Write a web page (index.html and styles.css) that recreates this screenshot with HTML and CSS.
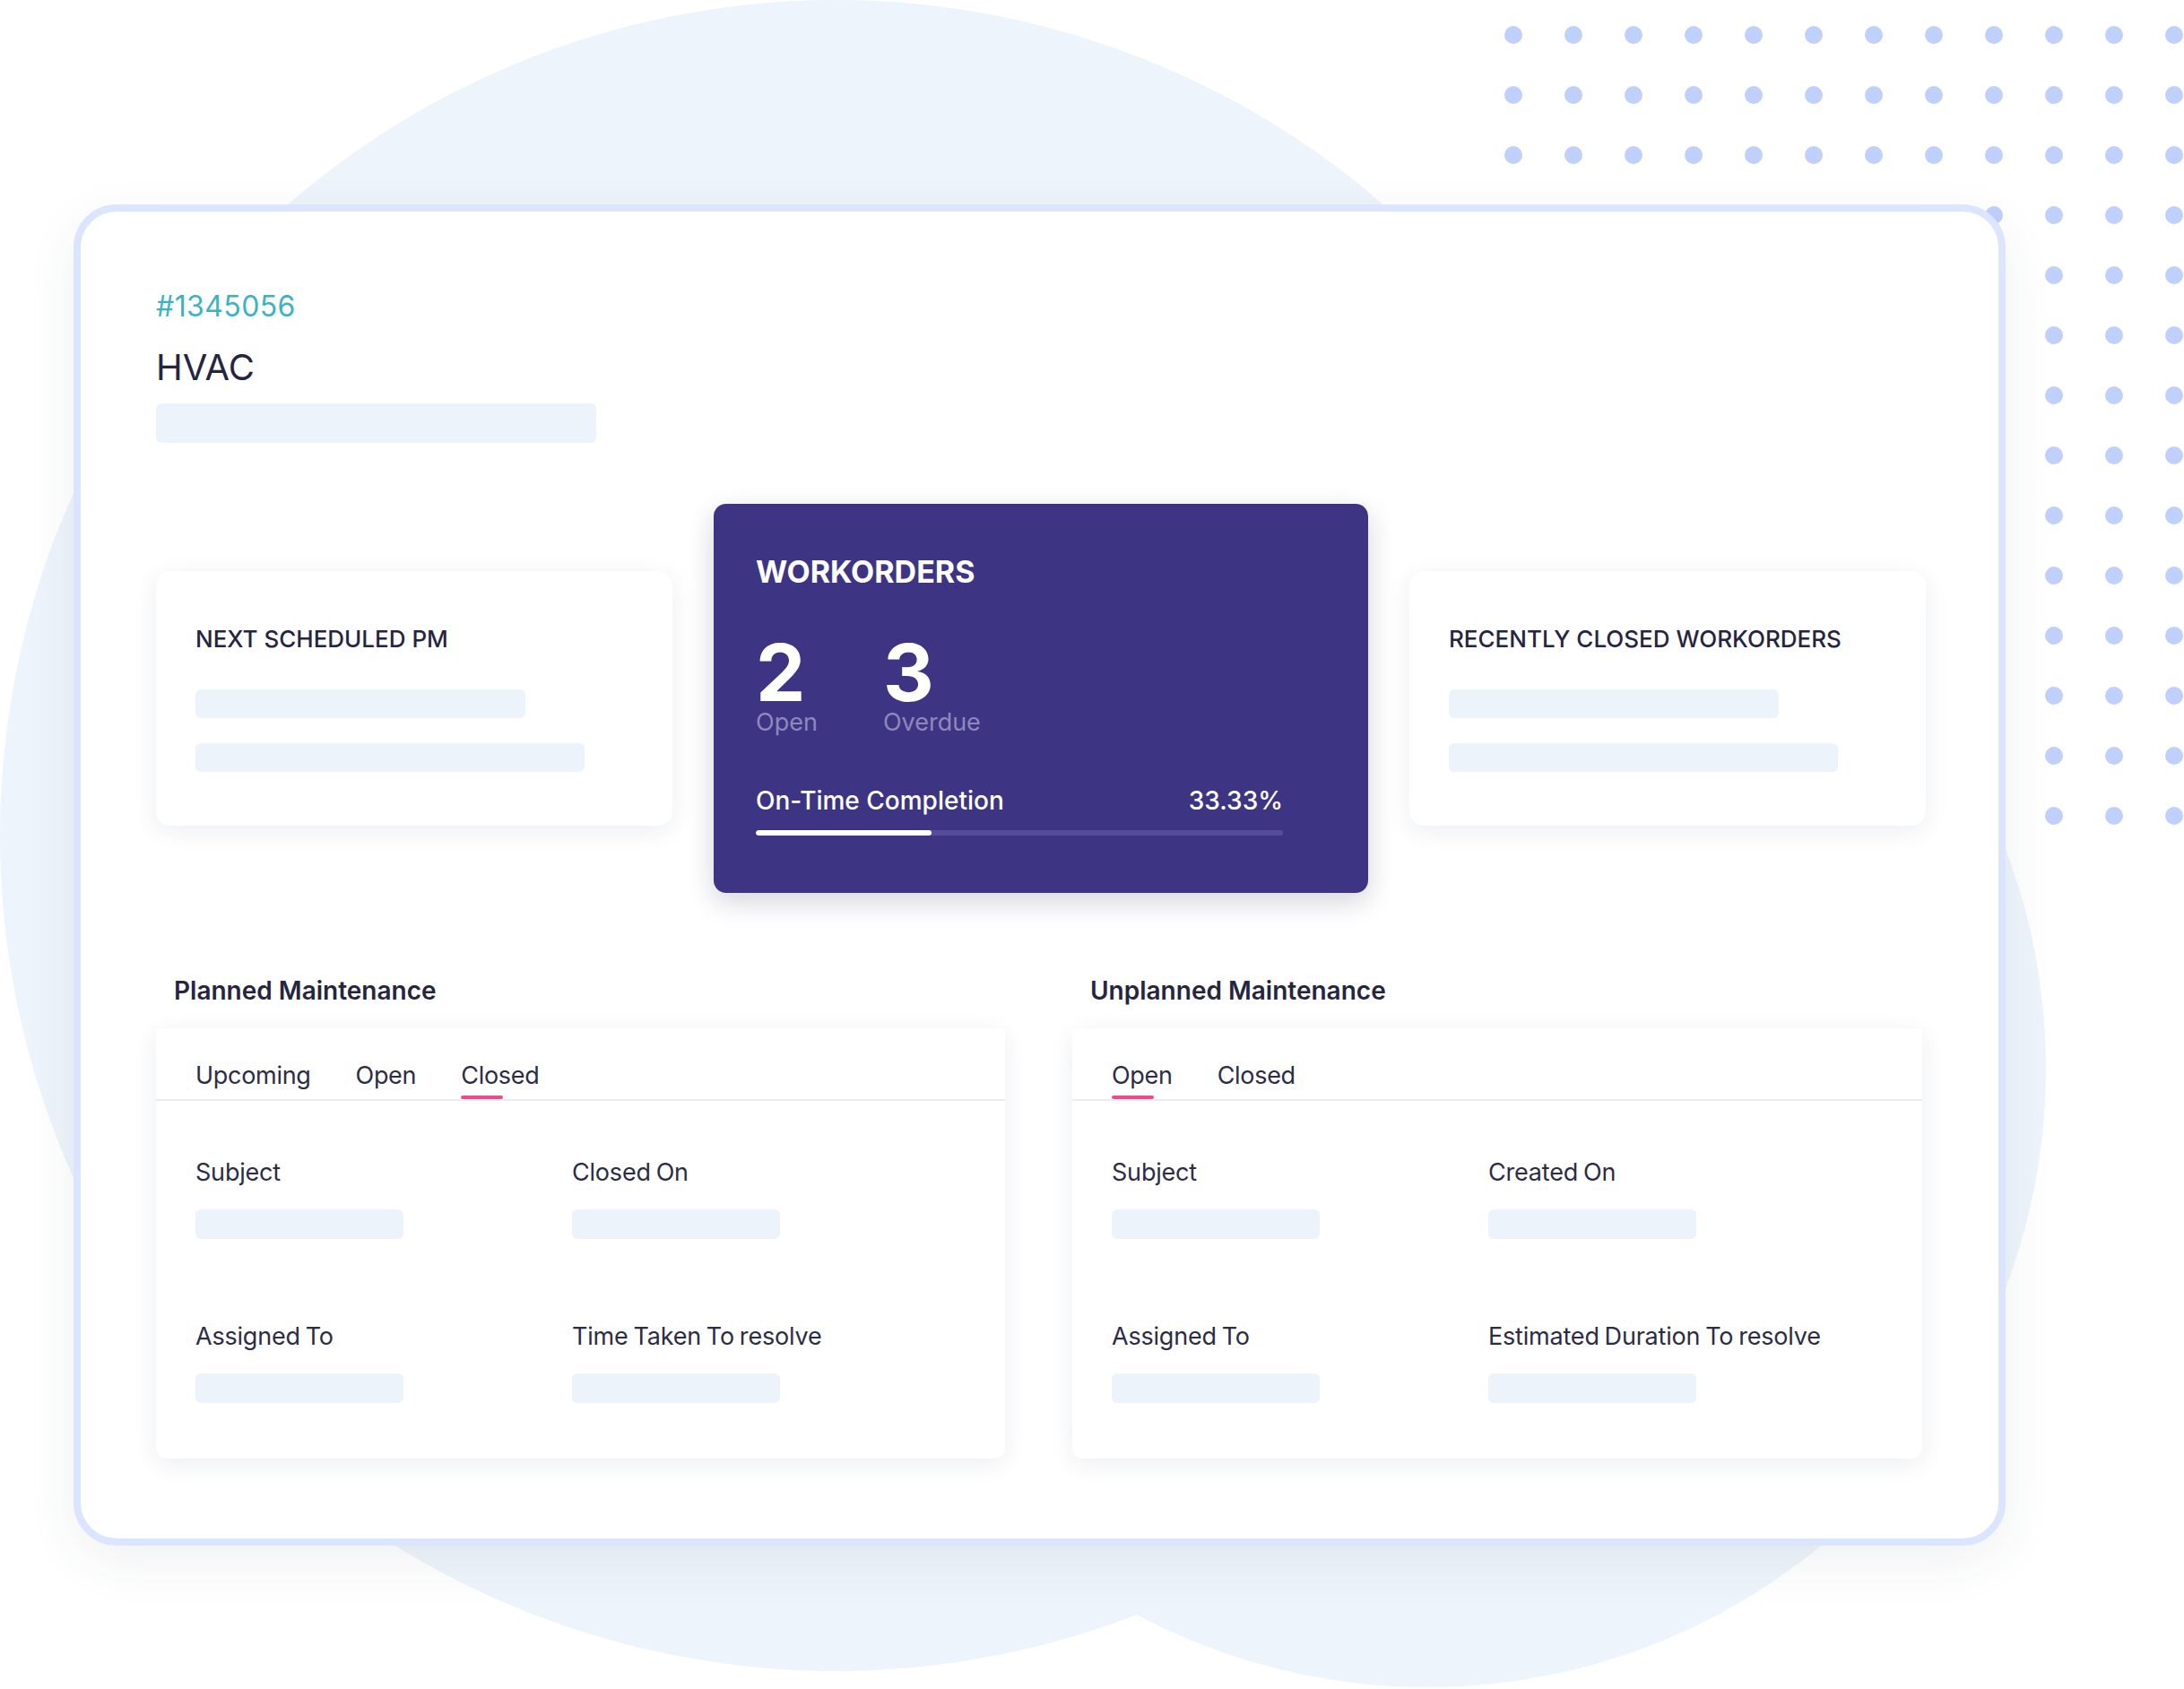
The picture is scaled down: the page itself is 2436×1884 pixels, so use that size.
FILE: index.html
```html
<!DOCTYPE html>
<html lang="en">
<head>
<meta charset="utf-8">
<title>HVAC asset</title>
<link rel="stylesheet" href="styles.css">
</head>
<body>
<div class="backdrop">
  <div class="blob blob-a"></div>
  <div class="blob blob-b"></div>
  <div class="dots">
    <span></span><span></span><span></span><span></span><span></span><span></span><span></span><span></span><span></span><span></span><span></span><span></span>
    <span></span><span></span><span></span><span></span><span></span><span></span><span></span><span></span><span></span><span></span><span></span><span></span>
    <span></span><span></span><span></span><span></span><span></span><span></span><span></span><span></span><span></span><span></span><span></span><span></span>
    <span></span><span></span><span></span><span></span><span></span><span></span><span></span><span></span><span></span><span></span><span></span><span></span>
    <span></span><span></span><span></span><span></span><span></span><span></span><span></span><span></span><span></span><span></span><span></span><span></span>
    <span></span><span></span><span></span><span></span><span></span><span></span><span></span><span></span><span></span><span></span><span></span><span></span>
    <span></span><span></span><span></span><span></span><span></span><span></span><span></span><span></span><span></span><span></span><span></span><span></span>
    <span></span><span></span><span></span><span></span><span></span><span></span><span></span><span></span><span></span><span></span><span></span><span></span>
    <span></span><span></span><span></span><span></span><span></span><span></span><span></span><span></span><span></span><span></span><span></span><span></span>
    <span></span><span></span><span></span><span></span><span></span><span></span><span></span><span></span><span></span><span></span><span></span><span></span>
    <span></span><span></span><span></span><span></span><span></span><span></span><span></span><span></span><span></span><span></span><span></span><span></span>
    <span></span><span></span><span></span><span></span><span></span><span></span><span></span><span></span><span></span><span></span><span></span><span></span>
    <span></span><span></span><span></span><span></span><span></span><span></span><span></span><span></span><span></span><span></span><span></span><span></span>
    <span></span><span></span><span></span><span></span><span></span><span></span><span></span><span></span><span></span><span></span><span></span><span></span>
  </div>
</div>

<main class="asset-card">
  <header class="asset-head">
    <div class="asset-id">#1345056</div>
    <h1 class="asset-name">HVAC</h1>
    <div class="skel skel-subtitle"></div>
  </header>

  <section class="summary-row">
    <div class="info-card">
      <h2 class="info-title">NEXT SCHEDULED PM</h2>
      <div class="skel skel-a"></div>
      <div class="skel skel-b"></div>
    </div>

    <div class="wo-card">
      <h2 class="wo-title">WORKORDERS</h2>
      <div class="wo-stats">
        <div class="wo-stat">
          <div class="wo-num">2</div>
          <div class="wo-label">Open</div>
        </div>
        <div class="wo-stat">
          <div class="wo-num">3</div>
          <div class="wo-label">Overdue</div>
        </div>
      </div>
      <div class="wo-progress-head">
        <span>On-Time Completion</span>
        <span>33.33%</span>
      </div>
      <div class="wo-track"><div class="wo-fill" style="width:33.33%"></div></div>
    </div>

    <div class="info-card">
      <h2 class="info-title">RECENTLY CLOSED WORKORDERS</h2>
      <div class="skel skel-a"></div>
      <div class="skel skel-b"></div>
    </div>
  </section>

  <section class="maint-row">
    <div class="maint">
      <h3 class="maint-title">Planned Maintenance</h3>
      <div class="panel">
        <nav class="tabs">
          <span class="tab">Upcoming</span>
          <span class="tab">Open</span>
          <span class="tab active">Closed</span>
        </nav>
        <div class="fields">
          <div class="field">
            <div class="field-label">Subject</div>
            <div class="skel skel-field"></div>
          </div>
          <div class="field">
            <div class="field-label">Closed On</div>
            <div class="skel skel-field"></div>
          </div>
          <div class="field">
            <div class="field-label">Assigned To</div>
            <div class="skel skel-field"></div>
          </div>
          <div class="field">
            <div class="field-label">Time Taken To resolve</div>
            <div class="skel skel-field"></div>
          </div>
        </div>
      </div>
    </div>

    <div class="maint">
      <h3 class="maint-title">Unplanned Maintenance</h3>
      <div class="panel">
        <nav class="tabs">
          <span class="tab active">Open</span>
          <span class="tab">Closed</span>
        </nav>
        <div class="fields">
          <div class="field">
            <div class="field-label">Subject</div>
            <div class="skel skel-field"></div>
          </div>
          <div class="field">
            <div class="field-label">Created On</div>
            <div class="skel skel-field"></div>
          </div>
          <div class="field">
            <div class="field-label">Assigned To</div>
            <div class="skel skel-field"></div>
          </div>
          <div class="field">
            <div class="field-label">Estimated Duration To resolve</div>
            <div class="skel skel-field"></div>
          </div>
        </div>
      </div>
    </div>
  </section>
</main>
</body>
</html>
```

FILE: styles.css
```css
* { box-sizing: border-box; }

html, body {
  margin: 0;
  padding: 0;
}

body {
  width: 2436px;
  height: 1884px;
  overflow: hidden;
  position: relative;
  background: #ffffff;
  font-family: "Inter", "Noto Sans", "Liberation Sans", sans-serif;
  color: #26263f;
  padding: 228px 0 0 82px;
}

h1, h2, h3 { margin: 0; font-weight: inherit; }

/* decorative backdrop */
.backdrop {
  position: absolute;
  inset: 0;
  z-index: 0;
}

.blob {
  position: absolute;
  border-radius: 50%;
  background: #eef4fb;
}

.blob-a {
  left: 0;
  top: 0;
  width: 1864px;
  height: 1864px;
}

.blob-b {
  left: 902px;
  top: 502px;
  width: 1380px;
  height: 1380px;
}

.dots {
  position: absolute;
  left: 1678px;
  top: 29px;
  display: grid;
  grid-template-columns: repeat(12, 20px);
  grid-auto-rows: 20px;
  column-gap: 47px;
  row-gap: 47px;
}

.dots span {
  width: 20px;
  height: 20px;
  border-radius: 50%;
  background: #bfd0fc;
}

/* main card */
.asset-card {
  position: relative;
  z-index: 1;
  width: 2155px;
  border: 8px solid #dce5fe;
  border-radius: 48px;
  background: #ffffff;
  box-shadow: 0 18px 60px rgba(40, 50, 90, 0.07);
  padding: 86px 81px 89px 84px;
}

.asset-id {
  font-size: 32px;
  line-height: 40px;
  letter-spacing: 0.4px;
  color: #3bb3c3;
}

.asset-name {
  margin-top: 24px;
  font-size: 40px;
  line-height: 48px;
  color: #25253f;
}

.skel {
  background: #edf3fa;
  border-radius: 6px;
}

.skel-subtitle {
  margin-top: 16px;
  width: 491px;
  height: 44px;
}

/* summary row */
.summary-row {
  margin-top: 68px;
  display: flex;
  align-items: center;
  gap: 46px;
}

.info-card {
  width: 576px;
  height: 284px;
  background: #ffffff;
  border-radius: 16px;
  box-shadow: 0 6px 28px rgba(30, 40, 80, 0.08);
  padding: 60px 44px 0 44px;
}

.info-title {
  font-size: 26px;
  line-height: 32px;
  font-weight: 500;
  color: #25253f;
}

.skel-a {
  margin-top: 40px;
  width: 368px;
  height: 32px;
}

.skel-b {
  margin-top: 28px;
  width: 434px;
  height: 32px;
}

.wo-card {
  width: 730px;
  height: 434px;
  background: #3d3584;
  border-radius: 14px;
  box-shadow: 0 10px 30px rgba(20, 20, 60, 0.18);
  padding: 56px 95px 64px 47px;
  color: #ffffff;
}

.wo-title {
  font-size: 34px;
  line-height: 40px;
  font-weight: 700;
}

.wo-stats {
  margin-top: 52px;
  display: flex;
  gap: 73px;
}

.wo-num {
  font-size: 88px;
  line-height: 80px;
  font-weight: 700;
}

.wo-label {
  font-size: 27px;
  line-height: 32px;
  color: #8e89bd;
}

.wo-progress-head {
  margin-top: 55px;
  display: flex;
  justify-content: space-between;
  font-size: 28px;
  line-height: 32px;
  font-weight: 500;
}

.wo-track {
  margin-top: 17px;
  height: 6px;
  border-radius: 3px;
  background: #544e9a;
  overflow: hidden;
}

.wo-fill {
  height: 100%;
  border-radius: 3px;
  background: #ffffff;
}

/* maintenance panels */
.maint-row {
  margin-top: 93px;
  display: grid;
  grid-template-columns: 947px 948px;
  column-gap: 75px;
}

.maint-title {
  padding-left: 20px;
  font-size: 28px;
  line-height: 32px;
  font-weight: 600;
  color: #25253f;
}

.panel {
  margin-top: 26px;
  background: #ffffff;
  border-radius: 4px 4px 12px 12px;
  box-shadow: 0 6px 28px rgba(30, 40, 80, 0.08);
  padding-top: 37px;
}

.tabs {
  display: flex;
  gap: 50px;
  padding-left: 44px;
  border-bottom: 2px solid #ecedf1;
}

.tab {
  position: relative;
  font-size: 27px;
  line-height: 32px;
  letter-spacing: -0.3px;
  padding-bottom: 10px;
  color: #2c2c46;
}

.tab.active::after {
  content: "";
  position: absolute;
  left: 0;
  bottom: 0;
  width: 47px;
  height: 4px;
  border-radius: 2px;
  background: #ef4b8c;
}

.fields {
  display: grid;
  grid-template-columns: 420px 1fr;
  row-gap: 93px;
  padding: 64px 44px 62px 44px;
}

.field-label {
  font-size: 27px;
  line-height: 32px;
  letter-spacing: -0.2px;
  word-spacing: -1.5px;
  color: #2c2c46;
}

.skel-field {
  margin-top: 25px;
  width: 232px;
  height: 33px;
}
```
